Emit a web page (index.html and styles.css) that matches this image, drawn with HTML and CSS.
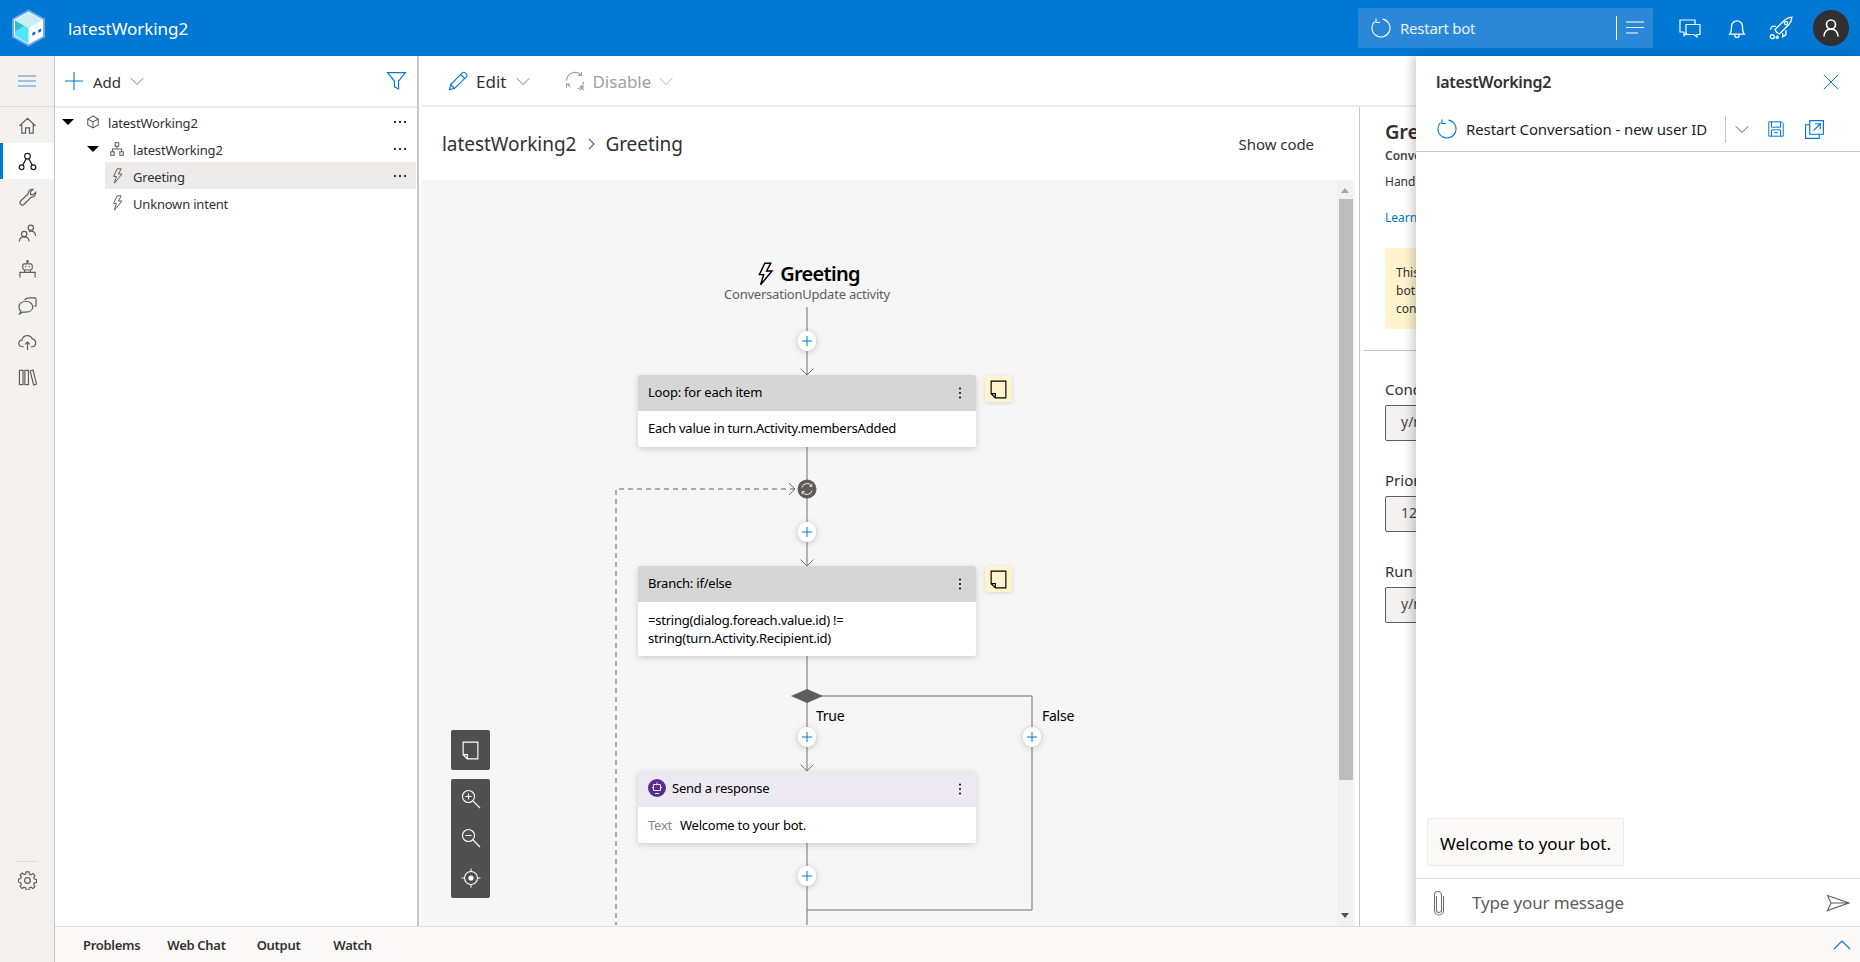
FILE: index.html
```html
<!DOCTYPE html>
<html lang="en">
<head>
<meta charset="utf-8">
<title>latestWorking2</title>
<link rel="stylesheet" href="styles.css">
</head>
<body>
<svg class="sprite" aria-hidden="true">
  <symbol id="i-home" viewBox="0 0 20 20"><path d="M1.500 10.500 10 2.500l8.500 8M4 8.500V18h4v-5.500h4V18h4V8.500"/></symbol>
  <symbol id="i-flow" viewBox="0 0 20 20"><circle cx="10" cy="4.500" r="3"/><circle cx="3.800" cy="16" r="2.500"/><circle cx="16.200" cy="16" r="2.500"/><path d="M8.600 7.200 5 13.800M11.400 7.200 15 13.800"/></symbol>
  <symbol id="i-wrench" viewBox="0 0 20 20"><path d="M2.500 14 10.800 6C10.300 3.500 12.800.8 15.800 1.500L13 4.300l.4 2.500 2.500.4L18.600 4.500c.7 3-2 5.500-4.600 5L5.900 17.600C4 19.500.8 15.800 2.500 14Z"/></symbol>
  <symbol id="i-users" viewBox="0 0 20 20"><circle cx="6.500" cy="10.500" r="2.800"/><path d="M1.500 18.500c0-3 2-5 5-5s5 2 5 5"/><circle cx="13.500" cy="4" r="2.800"/><path d="M11.500 8c4-1.500 7 .5 7 4.500"/></symbol>
  <symbol id="i-bot" viewBox="0 0 20 20"><path d="M10 1v3"/><circle cx="10" cy="1.500" r=".8"/><rect x="5" y="4" width="10" height="6.500" rx="2"/><path d="M7.500 7h1.200M11.300 7h1.200M7 10.500v2.500M13 10.500v2.500M2 18.500V13h16v5.500"/></symbol>
  <symbol id="i-chats" viewBox="0 0 20 20"><path d="M19 2.500v8h-2.500M7 4c1-1.500 3-2 5-2h7"/><path d="M1 11.500C1 8 4 5.500 8 5.500s7.500 2.500 7.500 6-3.500 5.500-7.500 5.500H5l-3.500 2L3 16c-1.300-1-2-2.700-2-4.500Z"/></symbol>
  <symbol id="i-cloud" viewBox="0 0 20 20"><path d="M6 15.500H4.500a3.500 3.500 0 0 1-.4-7 5.800 5.800 0 0 1 11-1.200 4.200 4.200 0 0 1 .4 8.200H13.500"/><path d="M10 19v-8.500M7.500 13 10 10.500l2.500 2.500"/></symbol>
  <symbol id="i-lib" viewBox="0 0 20 20"><rect x="1.500" y="2.500" width="3.800" height="15"/><rect x="7.200" y="2.500" width="3.800" height="15"/><path d="m12.800 3.200 3-1 3.700 14.600-3 1Z"/></symbol>
  <symbol id="i-gear" viewBox="0 0 20 20"><path d="M8.500 1h3l.5 2.300 1.700.7 2-1.300 2.100 2.100-1.300 2 .7 1.700 2.300.5v3l-2.300.5-.7 1.700 1.300 2-2.100 2.100-2-1.300-1.700.7-.5 2.300h-3l-.5-2.300-1.700-.7-2 1.300-2.100-2.100 1.300-2-.7-1.700L.5 11.500v-3l2.300-.5.7-1.700-1.300-2 2.100-2.100 2 1.300L8 3.300Z"/><circle cx="10" cy="10" r="3"/></symbol>
  <symbol id="i-plus" viewBox="0 0 20 20"><path d="M10 1v18M1 10h18"/></symbol>
  <symbol id="i-chev" viewBox="0 0 20 20"><path d="m1 6 9 9 9-9"/></symbol>
  <symbol id="i-filter" viewBox="0 0 20 20"><path d="M1.500 2.500h17L12 10.500V18l-4-2v-5.500Z"/></symbol>
  <symbol id="i-bolt" viewBox="0 0 20 20"><path d="M9 1 4.500 10.500h3.500L5.500 19 15 7.500H10.500L14 1H9Z"/></symbol>
  <symbol id="i-cube" viewBox="0 0 20 20"><path d="m10 1.500 7.500 4.200v8.600L10 18.500l-7.500-4.200V5.700ZM2.500 5.700 10 10l7.500-4.300M10 10v8.500"/></symbol>
  <symbol id="i-org" viewBox="0 0 20 20"><rect x="7.500" y="1" width="5" height="5"/><rect x="1" y="14" width="5" height="5"/><rect x="14" y="14" width="5" height="5"/><path d="M10 6v4M3.500 14v-4h13v4"/></symbol>
  <symbol id="i-pencil" viewBox="0 0 20 20"><path d="m1.500 18.500 1.200-5L14.500 1.700c1-1 2.800 0 3.500.8s1.500 2.300.4 3.400L6.500 17.500ZM2.700 13.500l3.800 4M12.800 3.500l3.800 3.800"/></symbol>
  <symbol id="i-disable" viewBox="0 0 20 20"><path d="M1.500 9.500A8.500 8.500 0 0 1 16 4M16.500 1v3.500H13M18.500 10.500a8.500 8.500 0 0 1-6 7.500M5.500 16a8.500 8.500 0 0 1-3-3M1.500 17v-4H5M15 15l4 4M19 15l-4 4"/></symbol>
  <symbol id="i-note" viewBox="0 0 20 20"><path d="M3 2h14v16H7l-4-4ZM3 14h4v4"/></symbol>
  <symbol id="i-zin" viewBox="0 0 20 20"><circle cx="7.500" cy="7.500" r="6"/><path d="m12 12 7 7M7.500 4.500v6M4.500 7.500h6"/></symbol>
  <symbol id="i-zout" viewBox="0 0 20 20"><circle cx="7.500" cy="7.500" r="6"/><path d="m12 12 7 7M4.500 7.500h6"/></symbol>
  <symbol id="i-center" viewBox="0 0 20 20"><circle cx="10" cy="10" r="6.500"/><circle fill="currentColor" cx="10" cy="10" r="2"/><path d="M10 .5v3M10 16.500v3M.5 10h3M16.500 10h3"/></symbol>
  <symbol id="i-restart" viewBox="0 0 20 20"><path d="M11.500 1.100a9 9 0 1 1-8 2.600M5 .5v4h4"/></symbol>
  <symbol id="i-comments" viewBox="0 0 22 20"><path d="M5 14H1V2h15v4M5 14v3.500L8 15"/><path d="M7 6.500h14v10h-3v2.500l-3-2.500H7Z"/></symbol>
  <symbol id="i-bell" viewBox="0 0 20 20"><path d="M3.500 15.500c1.500-1.500 1.500-3 1.500-7a5 5 0 0 1 10 0c0 4 0 5.500 1.500 7ZM8 15.500v1a2 2 0 0 0 4 0v-1"/></symbol>
  <symbol id="i-rocket" viewBox="0 0 22 22"><path d="M7 15 5.500 12.500 14 4c2-2 4.500-2.800 7-3-.2 2.500-1 5-3 7l-8.500 8.500Z"/><path d="M6.500 9.500H3L1 12.500M12.500 15.500V19l3-2v-4"/><circle cx="15.500" cy="6.500" r="1.500"/><circle cx="3" cy="19" r="1.800"/><circle cx="7.500" cy="19.500" r="1"/></symbol>
  <symbol id="i-person" viewBox="0 0 20 20"><circle cx="10" cy="6.500" r="4.500"/><path d="M3 18.500c0-4.500 3-7.500 7-7.500s7 3 7 7.500"/></symbol>
  <symbol id="i-save" viewBox="0 0 20 20"><path d="M2 2h14l2 2v14H2ZM5 2v6h10V2M5 18v-7h10v7M8 14h4"/></symbol>
  <symbol id="i-popout" viewBox="0 0 20 20"><path d="M5.500 5.500H1.500v13h13v-4M5.500 1.500h13v13h-13ZM9 11l6.500-6.500M10.500 4.500h5v5"/></symbol>
  <symbol id="i-close" viewBox="0 0 20 20"><path d="m2 2 16 16M18 2 2 18"/></symbol>
  <symbol id="i-attach" viewBox="0 0 14 26"><path d="M4.500 6v14a2.500 2.500 0 0 0 5 0V5a3.500 3.500 0 0 0-7 0v15.500a4.500 4.500 0 0 0 9 0V6"/></symbol>
  <symbol id="i-send" viewBox="0 0 24 18"><path d="M1.500 1.500 23 9 1.500 16.500 5 9ZM5 9h18"/></symbol>
</svg>

<div class="app">
  <header class="topbar">
    <svg class="logo" viewBox="0 0 34 38" aria-hidden="true">
      <path d="M17 1 33 10v18l-16 9-16-9V10Z" fill="#fff" stroke="#6fa8ea" stroke-width="2"/>
      <path d="M17 3 31 11 17 19 3 11Z" fill="#c9eef6"/>
      <path d="M3 11 13 17 3 23Z" fill="#35bdd6"/>
      <path d="M3 23 13 17 17 19V35L3 27Z" fill="#50e6ff"/>
      <path d="m21 24 3-1.500v3l-3 1.500ZM27 21l3-1.500v3L27 24Z" fill="#0a6fc2"/>
    </svg>
    <div class="app-title">latestWorking2</div>
    <div class="top-actions">
      <div class="restart-box">
        <svg class="ic ic-20 white"><use href="#i-restart"/></svg>
        <span class="restart-label">Restart bot</span>
        <span class="restart-sep"></span>
        <svg class="ic lines" viewBox="0 0 18 14"><path d="M0 1h18M0 6.500h18M0 12h12"/></svg>
      </div>
      <svg class="ic ic-comments white"><use href="#i-comments"/></svg>
      <svg class="ic ic-bell white"><use href="#i-bell"/></svg>
      <svg class="ic ic-rocket white"><use href="#i-rocket"/></svg>
      <div class="avatar"><svg class="ic ic-20 white"><use href="#i-person"/></svg></div>
    </div>
  </header>

  <div class="shell">
    <nav class="nav">
      <div class="nav-top"><svg class="ic hamburger" viewBox="0 0 18 12"><path d="M0 1h18M0 6h18M0 11h18"/></svg></div>
      <div class="nav-item"><svg class="ic ic-nav"><use href="#i-home"/></svg></div>
      <div class="nav-item active"><svg class="ic ic-nav"><use href="#i-flow"/></svg></div>
      <div class="nav-item"><svg class="ic ic-nav"><use href="#i-wrench"/></svg></div>
      <div class="nav-item"><svg class="ic ic-nav"><use href="#i-users"/></svg></div>
      <div class="nav-item"><svg class="ic ic-nav"><use href="#i-bot"/></svg></div>
      <div class="nav-item"><svg class="ic ic-nav"><use href="#i-chats"/></svg></div>
      <div class="nav-item"><svg class="ic ic-nav"><use href="#i-cloud"/></svg></div>
      <div class="nav-item"><svg class="ic ic-nav"><use href="#i-lib"/></svg></div>
      <div class="nav-bottom"><div class="nav-item"><svg class="ic ic-nav"><use href="#i-gear"/></svg></div></div>
    </nav>

    <div class="content">
      <div class="workspace">
        <aside class="tree">
          <div class="tree-bar">
            <svg class="ic ic-20 blue"><use href="#i-plus"/></svg>
            <span class="add-label">Add</span>
            <svg class="ic ic-14 soft"><use href="#i-chev"/></svg>
            <svg class="ic filter blue"><use href="#i-filter"/></svg>
          </div>
          <div class="tree-list">
            <div class="row lvl-0"><span class="caret"></span><svg class="ic ic-13"><use href="#i-cube"/></svg><span class="row-text">latestWorking2</span><span class="dots"></span></div>
            <div class="row lvl-1"><span class="caret"></span><svg class="ic ic-13"><use href="#i-org"/></svg><span class="row-text">latestWorking2</span><span class="dots"></span></div>
            <div class="row lvl-2 selected"><svg class="ic ic-13 bolt"><use href="#i-bolt"/></svg><span class="row-text">Greeting</span><span class="dots"></span></div>
            <div class="row lvl-2"><svg class="ic ic-13 bolt"><use href="#i-bolt"/></svg><span class="row-text">Unknown intent</span></div>
          </div>
        </aside>

        <main class="main">
          <div class="cmdbar">
            <svg class="ic ic-20 blue"><use href="#i-pencil"/></svg>
            <span class="cmd-text">Edit</span>
            <svg class="ic ic-14 soft"><use href="#i-chev"/></svg>
            <svg class="ic ic-20 off cmd-gap"><use href="#i-disable"/></svg>
            <span class="cmd-text off">Disable</span>
            <svg class="ic ic-14 off"><use href="#i-chev"/></svg>
          </div>
          <div class="split">
            <section class="design">
              <div class="crumbs">
                <span>latestWorking2</span>
                <svg class="ic crumb-chev" viewBox="0 0 8 12"><path d="m1 1 5 5-5 5"/></svg>
                <span>Greeting</span>
                <span class="show-code">Show code</span>
              </div>
              <div class="canvas">
                <svg class="wires" viewBox="0 0 933 745" aria-hidden="true">
                  <g class="wire">
                    <path d="M385 127v68M378.500 188.500 385 195l6.500-6.500"/>
                    <path d="M385 267v42M385 309v77M378.500 379.500 385 386l6.500-6.500"/>
                    <path d="M385 476v115M378.500 584.500 385 591l6.500-6.500"/>
                    <path d="M385 516h225v214H385M385 663v82"/>
                    <path class="dash" d="M373 309H194v436"/>
                    <path d="m367 303 6 6-6 6"/>
                  </g>
                  <path class="diamond" d="m369 516 16-7 16 7-16 7Z"/>
                  <circle class="loop-dot" cx="385" cy="309" r="9.500"/>
                  <path class="loop-arrows" d="M380 307.500a5.200 5.200 0 0 1 9.500-1.500M390 310.500a5.200 5.200 0 0 1-9.500 1.500M389.800 303.800V306.300H387.300M380.200 314.200V311.700H382.700"/>
                  <g class="plus"><rect x="376" y="151" width="18" height="20" rx="9"/><path d="M385 156v10M380 161h10"/></g>
                  <g class="plus"><rect x="376" y="342" width="18" height="20" rx="9"/><path d="M385 347v10M380 352h10"/></g>
                  <g class="plus"><rect x="376" y="547" width="18" height="20" rx="9"/><path d="M385 552v10M380 557h10"/></g>
                  <g class="plus"><rect x="601" y="547" width="18" height="20" rx="9"/><path d="M610 552v10M605 557h10"/></g>
                  <g class="plus"><rect x="376" y="686" width="18" height="20" rx="9"/><path d="M385 691v10M380 696h10"/></g>
                </svg>

                <div class="head-node">
                  <div class="head-title"><svg class="ic head-bolt ink"><use href="#i-bolt"/></svg>Greeting</div>
                  <div class="head-sub">ConversationUpdate activity</div>
                </div>

                <div class="card at-loop">
                  <div class="card-head"><span>Loop: for each item</span><span class="kebab"></span></div>
                  <div class="card-body">Each value in turn.Activity.membersAdded</div>
                </div>
                <div class="sticky at-note1"><svg class="ic ic-note ink"><use href="#i-note"/></svg></div>

                <div class="card at-branch">
                  <div class="card-head"><span>Branch: if/else</span><span class="kebab"></span></div>
                  <div class="card-body two">=string(dialog.foreach.value.id) != string(turn.Activity.Recipient.id)</div>
                </div>
                <div class="sticky at-note2"><svg class="ic ic-note ink"><use href="#i-note"/></svg></div>

                <div class="label at-true">True</div>
                <div class="label at-false">False</div>

                <div class="card at-send">
                  <div class="card-head lilac">
                    <svg class="bot-badge" viewBox="0 0 18 18"><circle cx="9" cy="9" r="9" fill="#5c2d91"/><path d="M9 3.500v2M5.500 5.500h7v6h-7ZM4 8.500h1.500M12.500 8.500H14M7 14.500h4" fill="none" stroke="#fff" stroke-width=".9"/></svg>
                    <span>Send a response</span><span class="kebab"></span>
                  </div>
                  <div class="card-body send-body"><span class="muted">Text</span>Welcome to your bot.</div>
                </div>

                <div class="tools">
                  <div class="tool-group"><div class="tool tool-note"><svg class="ic ic-note white"><use href="#i-note"/></svg></div></div>
                  <div class="tool-group">
                    <div class="tool"><svg class="ic ic-20 white"><use href="#i-zin"/></svg></div>
                    <div class="tool"><svg class="ic ic-20 white"><use href="#i-zout"/></svg></div>
                    <div class="tool"><svg class="ic ic-20 white"><use href="#i-center"/></svg></div>
                  </div>
                </div>

                <div class="scroll">
                  <span class="arrow-up"></span>
                  <span class="thumb"></span>
                  <span class="arrow-down"></span>
                </div>
              </div>
            </section>

            <aside class="props">
              <h2 class="props-title">Greeting</h2>
              <div class="props-sub">ConversationUpdate activity</div>
              <div class="props-desc">Handles a conversation update activity.</div>
              <div class="props-link">Learn more</div>
              <div class="notice">
                <div>This trigger greets new members of the</div>
                <div>bot conversation each time a user joins</div>
                <div>conversation.</div>
              </div>
              <div class="props-rule"></div>
              <label class="field-label first">Condition</label>
              <div class="field">y/n</div>
              <label class="field-label">Priority</label>
              <div class="field">123</div>
              <label class="field-label">Run once</label>
              <div class="field">y/n</div>
            </aside>
          </div>
        </main>

        <aside class="chat">
          <div class="chat-head">
            <span>latestWorking2</span>
            <svg class="ic ic-18 blue"><use href="#i-close"/></svg>
          </div>
          <div class="chat-tools">
            <svg class="ic ic-20 blue"><use href="#i-restart"/></svg>
            <span class="chat-tool-text">Restart Conversation - new user ID</span>
            <span class="chat-sep"></span>
            <svg class="ic ic-14 slate"><use href="#i-chev"/></svg>
            <svg class="ic ic-18 blue save"><use href="#i-save"/></svg>
            <svg class="ic ic-popout blue popout"><use href="#i-popout"/></svg>
          </div>
          <div class="chat-log"><div class="bubble">Welcome to your bot.</div></div>
          <div class="chat-input">
            <svg class="ic attach"><use href="#i-attach"/></svg>
            <span class="placeholder">Type your message</span>
            <svg class="ic send"><use href="#i-send"/></svg>
          </div>
        </aside>
      </div>

      <footer class="tabs">
        <span class="tab t1">Problems</span>
        <span class="tab t2">Web Chat</span>
        <span class="tab t3">Output</span>
        <span class="tab t4">Watch</span>
        <svg class="ic tabs-up blue" viewBox="0 0 18 10"><path d="m1 9 8-8 8 8"/></svg>
      </footer>
    </div>
  </div>
</div>
</body>
</html>
```

FILE: styles.css
```css
* { box-sizing: border-box; }
html, body { margin: 0; height: 100%; }
body {
  font-family: "Noto Sans", "Open Sans", sans-serif;
  color: #323130;
  background: #fff;
  overflow: hidden;
}
.sprite { position: absolute; width: 0; height: 0; }
.ic { fill: none; stroke: currentColor; stroke-width: 1.1; flex: none; display: block; overflow: visible; }
.ic-13 { width: 14px; height: 14px; color: #605e5c; stroke-width: 1.5; }
.bolt { width: 16px; height: 16px; margin-left: -1px; margin-right: -2px; stroke-width: 1.25; }
.ic-14 { width: 14px; height: 14px; stroke-width: 1.15; }
.ic-18 { width: 18px; height: 18px; }
.ic-20 { width: 20px; height: 20px; }
.ic-nav { width: 19px; height: 19px; stroke-width: 1.25; }
.ic-note { width: 21px; height: 21px; stroke-width: 1.1; }
.ic-popout { width: 21px; height: 21px; }
.head-bolt { width: 24px; height: 24px; stroke-width: 1.2; }
.white { color: #fff; }
.blue { color: #0078d4; }
.soft { color: #605e5c; }
.off { color: #a19f9d; }
.ink { color: #000; }
.slate { color: #323130; }

.app { height: 962px; display: flex; flex-direction: column; }

/* Top bar */
.topbar {
  height: 56px;
  flex: none;
  background: #0078d4;
  color: #fff;
  display: flex;
  align-items: center;
  padding-left: 12px;
}
.logo { width: 33px; height: 38px; flex: none; }
.app-title { margin-left: 23px; font-size: 17px; letter-spacing: -.05px; }
.top-actions { margin-left: auto; display: flex; align-items: center; }
.restart-box {
  width: 295px;
  height: 40px;
  background: #2b88d8;
  border-radius: 2px;
  display: flex;
  align-items: center;
  padding-left: 13px;
  margin-right: 26px;
}
.restart-label { margin-left: 9px; font-size: 15px; letter-spacing: -.25px; color: #e8f2fb; }
.restart-sep { width: 1px; height: 24px; background: #fff; margin-left: auto; margin-right: 9px; }
.lines { width: 18px; height: 14px; margin-right: 9px; }
.ic-comments { width: 22px; height: 20px; margin-right: 25px; stroke-width: 1.2; }
.ic-bell { width: 22px; height: 22px; margin-right: 21px; stroke-width: 1.2; }
.ic-rocket { width: 24px; height: 24px; margin-right: 20px; stroke-width: 1.2; }
.avatar {
  width: 36px; height: 36px; border-radius: 50%;
  background: #323130;
  display: flex; align-items: center; justify-content: center;
  margin-right: 11px;
}
.avatar .ic { stroke-width: 1.6; }

/* Layout */
.shell { flex: 1; display: flex; min-height: 0; }
.nav {
  width: 55px;
  flex: none;
  background: #f3f2f1;
  border-right: 1px solid #c8c6c4;
  display: flex;
  flex-direction: column;
}
.nav-top {
  height: 51px;
  border-bottom: 1px solid #e1dfdd;
  display: flex; align-items: center; justify-content: center;
}
.hamburger { width: 18px; height: 12px; color: #0078d4; opacity: .75; }
.nav-item {
  height: 36px;
  display: flex; align-items: center; justify-content: center;
  color: #605e5c;
}
.nav-item.active { background: #fff; border-left: 3px solid #0078d4; padding-right: 3px; color: #201f1e; }
.nav-bottom { margin-top: auto; margin-bottom: 64px; border-top: 1px solid #e1dfdd; margin-left: 16px; margin-right: 16px; }
.nav-bottom .nav-item { margin: 0 -16px; }

.content { flex: 1; min-width: 0; display: flex; flex-direction: column; }
.workspace { flex: 1; min-height: 0; display: flex; position: relative; }

/* Tree */
.tree { width: 364px; flex: none; border-right: 2px solid #c8c6c4; }
.tree-bar {
  height: 52px;
  border-bottom: 2px solid #edebe9;
  display: flex;
  align-items: center;
  padding: 0 10px 1px 9px;
}
.add-label { margin-left: 9px; margin-right: 9px; font-size: 15px; padding-top: 2px; }
.filter { width: 21px; height: 21px; margin-left: auto; }
.row { height: 27px; display: flex; align-items: center; font-size: 13px; margin-right: 1px; position: relative; }
.row-text { margin-left: 9px; padding-top: 3px; letter-spacing: -.2px; }
.lvl-0 { padding-left: 7px; }
.lvl-0 .row-text { margin-left: 8px; }
.lvl-1 { padding-left: 32px; }
.lvl-2 { margin-left: 50px; padding-left: 6px; }
.selected { background: #edebe9; }
.caret {
  width: 0; height: 0;
  border-left: 6px solid transparent;
  border-right: 6px solid transparent;
  border-top: 6px solid #000;
  margin-right: 12px;
  margin-top: 1px;
}
.lvl-1 .caret { margin-right: 11px; }
.dots {
  margin-left: auto;
  margin-right: 15px;
  margin-top: 1px;
  width: 2px;
  height: 2px;
  background: #323130;
  box-shadow: -5px 0 0 #323130, 5px 0 0 #323130;
}

/* Main */
.main { flex: 1; min-width: 0; display: flex; flex-direction: column; }
.cmdbar {
  height: 51px;
  flex: none;
  margin-left: 3px;
  border-bottom: 2px solid #edebe9;
  display: flex;
  align-items: center;
  padding-left: 26px;
}
.cmd-text { margin-left: 8px; margin-right: 10px; font-size: 17px; padding-top: 2px; }
.cmd-gap { margin-left: 35px; }
.cmd-text.off { margin-left: 7px; margin-right: 8px; }
.split { flex: 1; min-height: 0; display: flex; }
.design { width: 940px; flex: none; display: flex; flex-direction: column; min-height: 0; }
.crumbs {
  height: 73px;
  flex: none;
  display: flex;
  align-items: center;
  padding: 0 45px 0 23px;
  font-size: 19px;
  letter-spacing: -.05px;
}
.crumb-chev { width: 8px; height: 12px; margin: 0 9px 0 12px; color: #605e5c; }
.show-code { margin-left: auto; font-size: 15px; letter-spacing: -.05px; }

/* Canvas */
.canvas {
  flex: 1;
  position: relative;
  margin-left: 3px;
  margin-right: 4px;
  background: #f6f6f6;
  overflow: hidden;
}
.wires { position: absolute; left: 0; top: 0; width: 933px; height: 745px; }
.wire { fill: none; stroke: #707070; stroke-width: 1; }
.dash { stroke-dasharray: 5 4; stroke: #605e5c; }
.diamond { fill: #605e5c; }
.loop-dot { fill: #605e5c; }
.loop-arrows { fill: none; stroke: #fff; stroke-width: .9; }
.plus rect { fill: #fff; filter: drop-shadow(0 1px 3px rgba(0,0,0,.22)); }
.plus path { fill: none; stroke: #0078d4; stroke-width: 1; }

.head-node { position: absolute; left: 235px; top: 78px; width: 300px; text-align: center; }
.head-title {
  display: flex; align-items: center; justify-content: center;
  font-size: 20px; font-weight: 600; color: #000; line-height: 32px; gap: 2px;
  letter-spacing: -.7px;
}
.head-sub { font-size: 13px; color: #605e5c; line-height: 16px; margin-top: -4px; letter-spacing: -.22px; }

.card {
  position: absolute;
  left: 216px;
  width: 338px;
  background: #fff;
  border-radius: 2px;
  box-shadow: 0 2px 6px rgba(0,0,0,.16);
  font-size: 13px;
  color: #000;
}
.at-loop { top: 195px; }
.at-branch { top: 386px; }
.at-send { top: 591px; }
.card-head {
  height: 36px;
  background: #d6d6d6;
  display: flex;
  align-items: center;
  padding: 0 10px 2px;
  border-radius: 2px 2px 0 0;
  letter-spacing: -.22px;
}
.lilac { background: #ede9f3; }
.bot-badge { width: 18px; height: 18px; margin-right: 6px; flex: none; }
.kebab {
  margin-left: auto;
  width: 2px; height: 2px;
  margin-right: 5px;
  margin-top: 2px;
  border-radius: 50%;
  background: #000;
  box-shadow: 0 -4.500px 0 #000, 0 4.500px 0 #000;
}
.card-body { padding: 9px 10px 10px; line-height: 17px; letter-spacing: -.24px; }
.card-body.two { padding: 9px 10px 6px; line-height: 18px; min-height: 54px; }
.send-body { padding-top: 10px; padding-bottom: 9px; }
.muted { color: #8a8886; margin-right: 8px; }

.sticky {
  position: absolute;
  left: 563px;
  width: 27px;
  height: 26px;
  background: #fff4ce;
  border-radius: 2px;
  box-shadow: 0 1px 4px rgba(0,0,0,.13);
  display: flex; align-items: center; justify-content: center;
}
.at-note1 { top: 196px; }
.at-note2 { top: 386px; }

.label { position: absolute; font-size: 14px; color: #000; line-height: 20px; letter-spacing: -.25px; }
.at-true { left: 394px; top: 526px; }
.at-false { left: 620px; top: 526px; }

.tools { position: absolute; left: 29px; top: 550px; width: 39px; display: flex; flex-direction: column; gap: 9px; }
.tool-group { background: #4f4f4f; border-radius: 2px; }
.tool { height: 39.500px; display: flex; align-items: center; justify-content: center; }
.tool-note { height: 40px; }

.scroll {
  position: absolute;
  right: 2px;
  top: 0;
  bottom: 0;
  width: 16px;
  background: #f1f1f1;
}
.thumb { position: absolute; left: 2px; right: 0; top: 19px; height: 581px; background: #bdbdbd; }
.arrow-up, .arrow-down {
  position: absolute; left: 4px; width: 0; height: 0;
  border-left: 4.500px solid transparent;
  border-right: 4.500px solid transparent;
}
.arrow-up { top: 8px; border-bottom: 5px solid #a6a6a6; }
.arrow-down { bottom: 8px; border-top: 5px solid #505050; }

/* Properties */
.props {
  flex: 1;
  min-width: 0;
  border-left: 1px solid #c8c6c4;
  padding-left: 25px;
  padding-right: 20px;
}
.props-title { margin: 10px 0 0; font-size: 20px; line-height: 30px; font-weight: 600; letter-spacing: -.2px; }
.props-sub { font-size: 12px; font-weight: 600; line-height: 16px; color: #484644; margin-top: 1px; }
.props-desc { font-size: 12px; line-height: 16px; margin-top: 10px; }
.props-link { font-size: 12px; line-height: 16px; color: #0078d4; margin-top: 20px; }
.notice {
  margin-top: 22px;
  height: 81px;
  background: #fff4ce;
  border-radius: 2px;
  padding: 16px 11px 0;
  font-size: 12px;
  line-height: 18px;
}
.props-rule { height: 1px; background: #c8c6c4; margin: 21px -20px 0 -21px; }
.field-label { display: block; font-size: 15px; line-height: 20px; margin-top: 29px; }
.field-label.first { margin-top: 28px; }
.field-label + .field { margin-top: 6px; }
.field {
  height: 36px;
  background: #f3f2f1;
  border: 1px solid #605e5c;
  border-radius: 2px;
  padding-left: 15px;
  font-size: 14px;
  line-height: 32px;
  color: #484644;
}

/* Chat overlay */
.chat {
  position: absolute;
  right: 0;
  top: 0;
  bottom: 0;
  width: 444px;
  background: #fff;
  box-shadow: -3px 0 10px rgba(0,0,0,.22);
  display: flex;
  flex-direction: column;
}
.chat-head {
  height: 50px;
  flex: none;
  display: flex;
  align-items: center;
  padding: 2px 20px 0 20px;
  font-size: 16px;
  font-weight: 600;
  justify-content: space-between;
  letter-spacing: -.3px;
}
.chat-tools {
  height: 46px;
  flex: none;
  border-bottom: 1px solid #c8c6c4;
  display: flex;
  align-items: center;
  padding: 1px 0 0 21px;
  color: #000;
}
.chat-tool-text { margin-left: 9px; font-size: 15px; letter-spacing: -.1px; color: #201f1e; }
.chat-sep { width: 1px; height: 27px; background: #c8c6c4; margin-left: 18px; margin-right: 9px; }
.save { margin-left: 18px; }
.popout { margin-left: 19px; }
.chat-log { flex: 1; display: flex; align-items: flex-end; padding: 0 0 12px 11px; }
.bubble {
  width: 197px;
  height: 48px;
  background: #faf9f8;
  border: 1px solid #edebe9;
  border-radius: 2px;
  padding-left: 12px;
  line-height: 50px;
  font-size: 17px;
  color: #000;
}
.chat-input {
  height: 48px;
  flex: none;
  border-top: 1px solid #e1dfdd;
  display: flex;
  align-items: center;
  padding-left: 16px;
}
.attach { width: 14px; height: 26px; color: #707070; }
.placeholder { margin-left: 26px; font-size: 17px; color: #605e5c; letter-spacing: -.15px; }
.send { width: 24px; height: 18px; color: #605e5c; margin-left: auto; margin-right: 10px; }

/* Bottom tabs */
.tabs {
  height: 36px;
  flex: none;
  background: #faf9f8;
  border-top: 1px solid #e1dfdd;
  display: flex;
  align-items: center;
  font-size: 13px;
  font-weight: 600;
  padding-left: 28px;
  position: relative;
  z-index: 1;
}
.tab { letter-spacing: -.3px; }
.t1 { margin-right: 27px; }
.t2 { margin-right: 31px; }
.t3 { margin-right: 33px; }
.tabs-up { width: 18px; height: 10px; margin-left: auto; margin-right: 9px; }
```
